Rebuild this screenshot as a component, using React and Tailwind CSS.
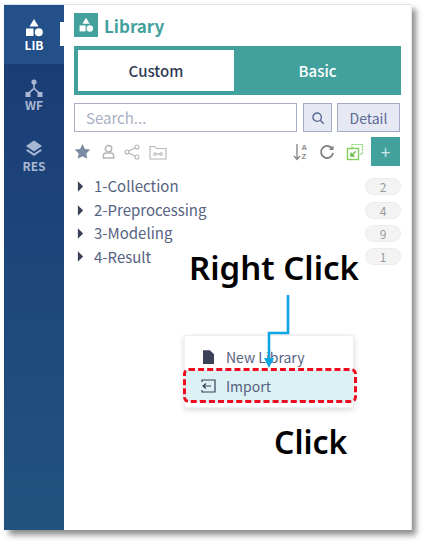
import React from "react";

const font = { fontFamily: '"Noto Sans CJK KR", "Noto Sans", sans-serif' };

function LibIcon({ className, fill = "#fff" }) {
  return (
    <svg viewBox="0 0 20 20" className={className} fill={fill}>
      <path d="M10 1 L14.5 8.5 H5.5 Z" />
      <rect x="2" y="10.5" width="7.5" height="7.5" />
      <circle cx="14.8" cy="14.3" r="4" />
    </svg>
  );
}

function WfIcon() {
  return (
    <svg viewBox="0 0 20 20" className="w-[20px] h-[20px]" fill="#a9b8d2">
      <circle cx="10" cy="4" r="2.6" />
      <rect x="1.5" y="14" width="5" height="5" />
      <rect x="13.5" y="14" width="5" height="5" />
      <path d="M9.2 5h1.6v5l5 4.5-1 1.2L10 11.6 5.2 15.7l-1-1.2 5-4.5z" />
    </svg>
  );
}

function ResIcon() {
  return (
    <svg viewBox="0 0 20 20" className="w-[20px] h-[20px]" fill="#a9b8d2">
      <path d="M10 1.5 18 7l-8 5.5L2 7z" />
      <path d="M3.6 10.2 10 14.6l6.4-4.4 1.6 1.2-8 5.6-8-5.6z" />
    </svg>
  );
}

function SideItem({ label, active, children }) {
  return (
    <div className={`relative flex flex-col items-center justify-center ${active ? "h-[59px] bg-[#24508a] text-white" : "h-[60px] pt-[2px] text-[#a9b8d2]"}`}>
      {children}
      <span className="text-[12px] leading-[14px] font-bold">{label}</span>
      {active && <div className="absolute right-0 top-[17px] w-[4px] h-[24px] bg-white" />}
    </div>
  );
}

function TreeRow({ label, count }) {
  return (
    <div className="flex items-center h-[23.4px]">
      <svg viewBox="0 0 8 12" className="w-[7px] h-[11px] mr-[10px] ml-[3px]" fill="#3a4258">
        <path d="M1 0 7 6 1 12z" />
      </svg>
      <span className="text-[15px] text-[#56637f] flex-1">{label}</span>
      <span className="w-[36px] h-[17px] rounded-full bg-[#f3f3f3] border border-[#ececec] text-[12px] leading-[15px] text-[#9a9a9a] text-center">
        {count}
      </span>
    </div>
  );
}

export default function App() {
  return (
    <div className="w-[424px] h-[543px] bg-white overflow-hidden relative" style={font}>
      <div className="ml-[4px] mt-[4px] w-[407px] h-[526px] flex bg-white border-t border-[#dfe3ee] shadow-[5px_5px_6px_rgba(0,0,0,0.45)]">
        {/* left nav */}
        <div className="w-[60px] shrink-0 bg-gradient-to-b from-[#1a3a75] to-[#22537f]">
          <SideItem label="LIB" active>
            <LibIcon className="w-[20px] h-[20px]" />
          </SideItem>
          <SideItem label="WF">
            <WfIcon />
          </SideItem>
          <div className="mt-[1px]">
            <SideItem label="RES">
              <ResIcon />
            </SideItem>
          </div>
        </div>

        {/* library panel */}
        <div className="flex-1 pl-[10px] pr-[10px] pt-[8px] border-r border-[#e8e8e8]">
          <div className="flex items-center h-[24px] gap-[6px]">
            <div className="w-[24px] h-[24px] bg-[#43a19d] flex items-center justify-center">
              <LibIcon className="w-[16px] h-[16px]" />
            </div>
            <span className="text-[17px] font-bold text-[#43a19d] pt-[2px]">Library</span>
          </div>

          <div className="flex h-[49px] mt-[9px] w-[327px] bg-[#43a19d]">
            <div className="w-[160px] border-[4px] border-r-0 border-[#43a19d] bg-white flex items-center justify-center pt-[2px] text-[15px] font-medium text-[#2f3a55]">
              Custom
            </div>
            <div className="flex-1 flex items-center justify-center pt-[2px] text-[15px] font-medium text-white">Basic</div>
          </div>

          <div className="flex mt-[8px] h-[29px] w-[326px]">
            <div className="w-[223px] border border-[#a9afc4] flex items-center pl-[11px] pt-[2px] text-[15px] text-[#a9afc4]">Search...</div>
            <div className="w-[29px] ml-[6px] border border-[#a3abc9] bg-[#e6e8f3] flex items-center justify-center">
              <svg viewBox="0 0 16 16" className="w-[14px] h-[14px]" fill="none" stroke="#5a6a95" strokeWidth="1.6">
                <circle cx="7" cy="7" r="4.8" />
                <path d="m10.500 10.500 4 4" />
              </svg>
            </div>
            <div className="w-[63px] ml-[5px] border border-[#a3abc9] bg-[#e6e8f3] flex items-center justify-center pt-[2px] text-[14px] text-[#5a6a95]">Detail</div>
          </div>

          <div className="flex items-center h-[29px] mt-[5px] w-[326px]">
            <svg viewBox="0 0 18 18" className="w-[17px] h-[17px]" fill="#7d8aa3">
              <path d="m9 1 2.500 5.300 5.700.7-4.200 4 1.100 5.800L9 14l-5.100 2.800L5 11 .8 7l5.700-.7z" />
            </svg>
            <svg viewBox="0 0 16 16" className="w-[15px] h-[15px] ml-[10px]" fill="none" stroke="#b5b5b5" strokeWidth="1.600">
              <circle cx="8" cy="5" r="3.400" />
              <path d="M2.500 15v-2.500c0-2 1.500-3 3-3h5c1.500 0 3 1 3 3V15z" />
            </svg>
            <svg viewBox="0 0 16 16" className="w-[16px] h-[16px] ml-[8px]" fill="none" stroke="#b5b5b5" strokeWidth="1.100">
              <circle cx="3" cy="8" r="2" />
              <circle cx="13" cy="3" r="2" />
              <circle cx="13" cy="13" r="2" />
              <path d="m5 7 6-3.200M5 9l6 3.200" />
            </svg>
            <svg viewBox="0 0 18 16" className="w-[18px] h-[16px] ml-[9px]" fill="none" stroke="#b5b5b5" strokeWidth="1.100">
              <path d="M1 2.500h5l1.500 2H17v10.500H1z" />
              <circle cx="6" cy="10" r="1.300" />
              <circle cx="12" cy="10" r="1.300" />
              <path d="M7.300 10h3.400" />
            </svg>

            <div className="flex-1" />

            <svg viewBox="0 0 8 18" className="w-[8px] h-[18px]" fill="none" stroke="#8a8a8a" strokeWidth="1.400">
              <path d="M4 1v15M1 13l3 3.500L7 13" />
            </svg>
            <div className="flex flex-col ml-[1px] font-['Liberation_Sans'] text-[7.5px] leading-[9px] font-bold text-[#8a8a8a]">
              <span>A</span>
              <span>Z</span>
            </div>
            <svg viewBox="0 0 16 16" className="w-[16px] h-[16px] ml-[12px]" fill="none" stroke="#808080" strokeWidth="1.800">
              <path d="M13.300 5A6 6 0 1 0 14 9" />
              <path d="M14.500 1.500v4.500H10" fill="#808080" stroke="none" />
            </svg>
            <svg viewBox="0 0 18 18" className="w-[18px] h-[18px] ml-[11px]" fill="none" stroke="#7fd05f" strokeWidth="1.100">
              <path d="M6 5V1.500h10.500V11H13" strokeDasharray="2 1" />
              <rect x="1.500" y="5.500" width="11" height="11" strokeWidth="1.400" />
              <path d="M9.500 8.500 5.500 12.500M5 9.500v3.500h3.500" stroke="#5fb83c" strokeWidth="1.400" />
            </svg>
            <div className="w-[29px] h-[29px] ml-[7px] bg-[#43a19d] flex items-center justify-center text-[17px] leading-none text-[#cfe8e6]">+</div>
          </div>

          <div className="mt-[9px] w-[327px]">
            <TreeRow label="1-Collection" count="2" />
            <TreeRow label="2-Preprocessing" count="4" />
            <TreeRow label="3-Modeling" count="9" />
            <TreeRow label="4-Result" count="1" />
          </div>
        </div>
      </div>

      {/* annotation overlay */}
      <div className="absolute left-[189px] top-[248px] font-['Noto_Sans'] text-[33px] leading-[40px] font-semibold text-black whitespace-nowrap">Right Click</div>

      <div className="absolute left-[184px] top-[335px] w-[170px] h-[73px] bg-white border border-[#efefef] shadow-[0_2px_6px_rgba(0,0,0,0.15)] pt-[9px]">
        <div className="flex items-center h-[24px] pl-[18px] text-[14px] text-[#56637f]">
          <svg viewBox="0 0 12 15" className="w-[11px] h-[14px] mr-[12px]" fill="#3a4258">
            <path d="M0 0h7.500L12 4.500V15H0z" />
          </svg>
          New Library
        </div>
        <div className="flex items-center h-[32px] mt-[1px] pl-[16px] bg-[#dcf1f4] text-[14px] text-[#56637f]">
          <svg viewBox="0 0 15 14" className="w-[15px] h-[14px] mr-[10px]" fill="none" stroke="#3a4258" strokeWidth="1.200">
            <path d="M1 3V1h13v12H1v-2" />
            <path d="M10 7H2M5 4.500 2 7l3 2.500" />
          </svg>
          Import
        </div>
      </div>

      <div className="absolute left-[183px] top-[368px] w-[174px] h-[35px] border-[3px] border-dashed border-[#ee0b1f] rounded-[6px]" />

      <svg className="absolute left-[260px] top-[294px]" width="34" height="76" viewBox="0 0 34 76" fill="none">
        <path d="M28 1v38H9v26" stroke="#0ea5e4" strokeWidth="2.600" />
        <path d="M4 64h10l-5 10z" fill="#0ea5e4" />
      </svg>

      <div className="absolute left-[274px] top-[422px] font-['Noto_Sans'] text-[32px] leading-[40px] font-semibold text-black whitespace-nowrap">Click</div>
    </div>
  );
}
